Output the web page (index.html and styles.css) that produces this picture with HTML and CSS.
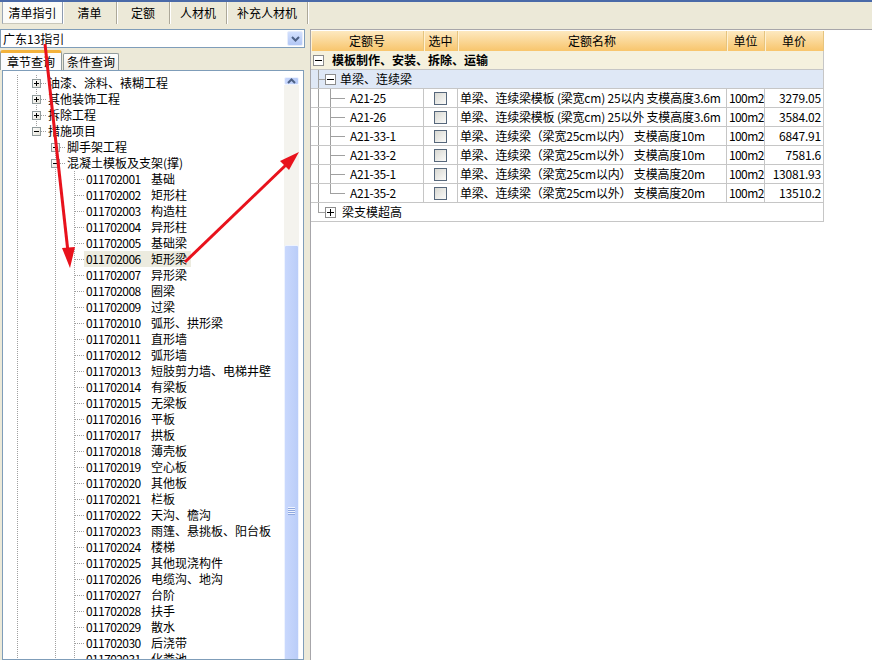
FILE: index.html
```html
<!DOCTYPE html>
<html lang="zh">
<head>
<meta charset="utf-8">
<title>清单指引</title>
<link rel="stylesheet" href="styles.css">
</head>
<body>
<div class="topbar">
  <div class="tab sel w1">清单指引</div>
  <div class="tab w2">清单</div>
  <div class="tab w3">定额</div>
  <div class="tab w4">人材机</div>
  <div class="tab w5">补充人材机</div>
</div>
<div class="main">
  <div class="left">
    <div class="combo">
      <span class="combo-text">广东13指引</span>
      <span class="combo-btn"><svg width="9" height="6" viewBox="0 0 9 6"><path d="M1 1 L4.5 4.5 L8 1" fill="none" stroke="#4d6185" stroke-width="2"/></svg></span>
    </div>
    <div class="subtabs">
      <div class="stab sel">章节查询</div>
      <div class="stab">条件查询</div>
    </div>
    <div class="treebox">
      <div class="tree">
        <div class="row"><span class="g v"></span><span class="g t"><i class="bx plus"></i></span><span class="tx">油漆、涂料、裱糊工程</span></div>
        <div class="row"><span class="g v"></span><span class="g t"><i class="bx plus"></i></span><span class="tx">其他装饰工程</span></div>
        <div class="row"><span class="g v"></span><span class="g t"><i class="bx plus"></i></span><span class="tx">拆除工程</span></div>
        <div class="row"><span class="g v"></span><span class="g l"><i class="bx"></i></span><span class="tx">措施项目</span></div>
        <div class="row"><span class="g v"></span><span class="g"></span><span class="g t"><i class="bx plus"></i></span><span class="tx">脚手架工程</span></div>
        <div class="row"><span class="g v"></span><span class="g"></span><span class="g t"><i class="bx"></i></span><span class="tx">混凝土模板及支架(撑)</span></div>
        <div class="row"><span class="g v"></span><span class="g"></span><span class="g v"></span><span class="g t"></span><span class="tx leaf"><b class="code">011702001</b>基础</span></div>
        <div class="row"><span class="g v"></span><span class="g"></span><span class="g v"></span><span class="g t"></span><span class="tx leaf"><b class="code">011702002</b>矩形柱</span></div>
        <div class="row"><span class="g v"></span><span class="g"></span><span class="g v"></span><span class="g t"></span><span class="tx leaf"><b class="code">011702003</b>构造柱</span></div>
        <div class="row"><span class="g v"></span><span class="g"></span><span class="g v"></span><span class="g t"></span><span class="tx leaf"><b class="code">011702004</b>异形柱</span></div>
        <div class="row"><span class="g v"></span><span class="g"></span><span class="g v"></span><span class="g t"></span><span class="tx leaf"><b class="code">011702005</b>基础梁</span></div>
        <div class="row"><span class="g v"></span><span class="g"></span><span class="g v"></span><span class="g t"></span><span class="tx leaf hl"><b class="code">011702006</b>矩形梁</span></div>
        <div class="row"><span class="g v"></span><span class="g"></span><span class="g v"></span><span class="g t"></span><span class="tx leaf"><b class="code">011702007</b>异形梁</span></div>
        <div class="row"><span class="g v"></span><span class="g"></span><span class="g v"></span><span class="g t"></span><span class="tx leaf"><b class="code">011702008</b>圈梁</span></div>
        <div class="row"><span class="g v"></span><span class="g"></span><span class="g v"></span><span class="g t"></span><span class="tx leaf"><b class="code">011702009</b>过梁</span></div>
        <div class="row"><span class="g v"></span><span class="g"></span><span class="g v"></span><span class="g t"></span><span class="tx leaf"><b class="code">011702010</b>弧形、拱形梁</span></div>
        <div class="row"><span class="g v"></span><span class="g"></span><span class="g v"></span><span class="g t"></span><span class="tx leaf"><b class="code">011702011</b>直形墙</span></div>
        <div class="row"><span class="g v"></span><span class="g"></span><span class="g v"></span><span class="g t"></span><span class="tx leaf"><b class="code">011702012</b>弧形墙</span></div>
        <div class="row"><span class="g v"></span><span class="g"></span><span class="g v"></span><span class="g t"></span><span class="tx leaf"><b class="code">011702013</b>短肢剪力墙、电梯井壁</span></div>
        <div class="row"><span class="g v"></span><span class="g"></span><span class="g v"></span><span class="g t"></span><span class="tx leaf"><b class="code">011702014</b>有梁板</span></div>
        <div class="row"><span class="g v"></span><span class="g"></span><span class="g v"></span><span class="g t"></span><span class="tx leaf"><b class="code">011702015</b>无梁板</span></div>
        <div class="row"><span class="g v"></span><span class="g"></span><span class="g v"></span><span class="g t"></span><span class="tx leaf"><b class="code">011702016</b>平板</span></div>
        <div class="row"><span class="g v"></span><span class="g"></span><span class="g v"></span><span class="g t"></span><span class="tx leaf"><b class="code">011702017</b>拱板</span></div>
        <div class="row"><span class="g v"></span><span class="g"></span><span class="g v"></span><span class="g t"></span><span class="tx leaf"><b class="code">011702018</b>薄壳板</span></div>
        <div class="row"><span class="g v"></span><span class="g"></span><span class="g v"></span><span class="g t"></span><span class="tx leaf"><b class="code">011702019</b>空心板</span></div>
        <div class="row"><span class="g v"></span><span class="g"></span><span class="g v"></span><span class="g t"></span><span class="tx leaf"><b class="code">011702020</b>其他板</span></div>
        <div class="row"><span class="g v"></span><span class="g"></span><span class="g v"></span><span class="g t"></span><span class="tx leaf"><b class="code">011702021</b>栏板</span></div>
        <div class="row"><span class="g v"></span><span class="g"></span><span class="g v"></span><span class="g t"></span><span class="tx leaf"><b class="code">011702022</b>天沟、檐沟</span></div>
        <div class="row"><span class="g v"></span><span class="g"></span><span class="g v"></span><span class="g t"></span><span class="tx leaf"><b class="code">011702023</b>雨篷、悬挑板、阳台板</span></div>
        <div class="row"><span class="g v"></span><span class="g"></span><span class="g v"></span><span class="g t"></span><span class="tx leaf"><b class="code">011702024</b>楼梯</span></div>
        <div class="row"><span class="g v"></span><span class="g"></span><span class="g v"></span><span class="g t"></span><span class="tx leaf"><b class="code">011702025</b>其他现浇构件</span></div>
        <div class="row"><span class="g v"></span><span class="g"></span><span class="g v"></span><span class="g t"></span><span class="tx leaf"><b class="code">011702026</b>电缆沟、地沟</span></div>
        <div class="row"><span class="g v"></span><span class="g"></span><span class="g v"></span><span class="g t"></span><span class="tx leaf"><b class="code">011702027</b>台阶</span></div>
        <div class="row"><span class="g v"></span><span class="g"></span><span class="g v"></span><span class="g t"></span><span class="tx leaf"><b class="code">011702028</b>扶手</span></div>
        <div class="row"><span class="g v"></span><span class="g"></span><span class="g v"></span><span class="g t"></span><span class="tx leaf"><b class="code">011702029</b>散水</span></div>
        <div class="row"><span class="g v"></span><span class="g"></span><span class="g v"></span><span class="g t"></span><span class="tx leaf"><b class="code">011702030</b>后浇带</span></div>
        <div class="row"><span class="g v"></span><span class="g"></span><span class="g v"></span><span class="g t"></span><span class="tx leaf"><b class="code">011702031</b>化粪池</span></div>
      </div>
      <div class="vscroll">
        <div class="sb-up"><svg width="9" height="6" viewBox="0 0 9 6"><path d="M1 5 L4.5 1.5 L8 5" fill="none" stroke="#4d6185" stroke-width="2"/></svg></div>
        <div class="sb-track"><div class="sb-thumb"><span class="grip"></span></div></div>
      </div>
    </div>
  </div>
  <div class="right">
    <div class="grid">
      <div class="hdr">
        <div class="c1">定额号</div>
        <div class="c2">选中</div>
        <div class="c3">定额名称</div>
        <div class="c4">单位</div>
        <div class="c5">单价</div>
      </div>
      <div class="r grp1"><i class="bx box11"></i><span class="gtext b">模板制作、安装、拆除、运输</span></div>
      <div class="r grp2"><span class="lead lead2"><i class="bx box11"></i></span><span class="gtext">单梁、连续梁</span></div>
      <div class="r"><div class="c1 tl"><span>A21-25</span></div><div class="c2"><i class="cb"></i></div><div class="c3">单梁、连续梁模板 (梁宽cm) 25以内 支模高度3.6m</div><div class="c4">100m2</div><div class="c5">3279.05</div></div>
      <div class="r"><div class="c1 tl"><span>A21-26</span></div><div class="c2"><i class="cb"></i></div><div class="c3">单梁、连续梁模板 (梁宽cm) 25以外 支模高度3.6m</div><div class="c4">100m2</div><div class="c5">3584.02</div></div>
      <div class="r"><div class="c1 tl"><span>A21-33-1</span></div><div class="c2"><i class="cb"></i></div><div class="c3">单梁、连续梁（梁宽25cm以内） 支模高度10m</div><div class="c4">100m2</div><div class="c5">6847.91</div></div>
      <div class="r"><div class="c1 tl"><span>A21-33-2</span></div><div class="c2"><i class="cb"></i></div><div class="c3">单梁、连续梁（梁宽25cm以外） 支模高度10m</div><div class="c4">100m2</div><div class="c5">7581.6</div></div>
      <div class="r"><div class="c1 tl"><span>A21-35-1</span></div><div class="c2"><i class="cb"></i></div><div class="c3">单梁、连续梁（梁宽25cm以内） 支模高度20m</div><div class="c4">100m2</div><div class="c5">13081.93</div></div>
      <div class="r"><div class="c1 tl last"><span>A21-35-2</span></div><div class="c2"><i class="cb"></i></div><div class="c3">单梁、连续梁（梁宽25cm以外） 支模高度20m</div><div class="c4">100m2</div><div class="c5">13510.2</div></div>
      <div class="r grp3"><span class="lead lead3"><i class="bx box11 plus"></i></span><span class="gtext">梁支模超高</span></div>
    </div>
  </div>
</div>
<svg class="overlay" width="872" height="660" viewBox="0 0 872 660">
  <line x1="45" y1="44" x2="68" y2="252" stroke="#e8121c" stroke-width="3"/>
  <polygon points="70,268 62,248 75,247" fill="#e8121c"/>
  <line x1="185" y1="262" x2="287" y2="164" stroke="#e8121c" stroke-width="3"/>
  <polygon points="299,152 289,170 280,161" fill="#e8121c"/>
</svg>
</body>
</html>
```
FILE: styles.css
```css
body {
  margin: 0;
  width: 872px;
  height: 660px;
  overflow: hidden;
  position: relative;
  background: #ece9d8;
  font-family: "Noto Sans CJK SC", "Liberation Sans", sans-serif;
  font-size: 12px;
  color: #000;
}

/* top tab bar */
.topbar {
  height: 24px;
  border-top: 2px solid #4a6aa8;
  display: flex;
  align-items: flex-start;
  padding-left: 2px;
}
.tab {
  height: 22px;
  line-height: 22px;
  text-align: center;
  box-sizing: border-box;
  border-right: 1px solid #aca899;
  box-shadow: 1px 0 0 #fff;
  flex: none;
}
.tab.sel {
  background: #fbfbf8;
  border-left: 1px solid #9aa6b6;
  border-right: 1px solid #8d9bb0;
  border-bottom: 1px solid #c9c7ba;
}
.w1 { width: 61px; }
.w2 { width: 54px; }
.w3 { width: 53px; }
.w4 { width: 57px; }
.w5 { width: 81px; }

.main {
  display: flex;
  height: 634px;
}

/* left column */
.left {
  width: 306px;
  flex: none;
  display: flex;
  flex-direction: column;
}
.combo {
  margin-top: 3px;
  width: 305px;
  height: 19px;
  box-sizing: border-box;
  border: 1px solid #7f9db9;
  background: #fff;
  display: flex;
  align-items: center;
  justify-content: space-between;
}
.combo-text {
  padding-left: 2px;
  line-height: 17px;
}
.combo-btn {
  width: 16px;
  height: 15px;
  margin-right: 1px;
  box-sizing: border-box;
  border: 1px solid #e6edfc;
  border-radius: 2px;
  background: linear-gradient(#d3e0fd, #b2c7f5);
  display: flex;
  align-items: center;
  justify-content: center;
}

.subtabs {
  height: 22px;
  display: flex;
  align-items: flex-end;
}
.stab {
  box-sizing: border-box;
  text-align: center;
  flex: none;
}
.stab.sel {
  width: 62px;
  height: 20px;
  line-height: 17px;
  background: #fcfcfe;
  border: 1px solid #919b9c;
  border-bottom: none;
  border-top: 3px solid #f3b23c;
  border-radius: 3px 3px 0 0;
}
.stab:not(.sel) {
  width: 56px;
  height: 17px;
  line-height: 16px;
  margin-left: 1px;
  background: linear-gradient(#ffffff, #ecebe5);
  border: 1px solid #919b9c;
  border-bottom: none;
  border-radius: 2px 2px 0 0;
}

.treebox {
  flex: 1;
  min-height: 0;
  margin-left: 2px;
  width: 302px;
  box-sizing: border-box;
  border: 1px solid #7f9db9;
  background: #fff;
  display: flex;
  overflow: hidden;
}
.tree {
  flex: 1;
  padding: 4px 0 0 5px;
  overflow: hidden;
}
.row {
  display: flex;
  height: 16px;
  line-height: 16px;
  white-space: nowrap;
}
.g {
  width: 19px;
  height: 16px;
  flex: none;
  display: flex;
  align-items: center;
  justify-content: center;
}
.g.v {
  background: repeating-linear-gradient(to bottom, #a0a0a0 0 1px, transparent 1px 2px) 9px 0 / 1px 100% no-repeat;
}
.g.t {
  background:
    repeating-linear-gradient(to right, #a0a0a0 0 1px, transparent 1px 2px) 10px 8px / 9px 1px no-repeat,
    repeating-linear-gradient(to bottom, #a0a0a0 0 1px, transparent 1px 2px) 9px 0 / 1px 100% no-repeat;
}
.g.l {
  background:
    repeating-linear-gradient(to right, #a0a0a0 0 1px, transparent 1px 2px) 10px 8px / 9px 1px no-repeat,
    repeating-linear-gradient(to bottom, #a0a0a0 0 1px, transparent 1px 2px) 9px 0 / 1px 8px no-repeat;
}
.bx {
  display: block;
  width: 9px;
  height: 9px;
  box-sizing: border-box;
  border: 1px solid #919b9c;
  background:
    linear-gradient(#000, #000) center / 5px 1px no-repeat,
    linear-gradient(135deg, #ffffff, #e4e2d8);
}
.bx.plus {
  background:
    linear-gradient(#000, #000) center / 5px 1px no-repeat,
    linear-gradient(#000, #000) center / 1px 5px no-repeat,
    linear-gradient(135deg, #ffffff, #e4e2d8);
}
.tx {
  padding-left: 2px;
}
.tx.leaf {
  padding-right: 4px;
}
.tx.hl {
  background: #ecebdf;
}
.code {
  font-weight: normal;
  display: inline-block;
  width: 65px;
  letter-spacing: -0.6px;
}

/* scrollbar */
.vscroll {
  width: 15px;
  flex: none;
  margin: 6px 4px 0 0;
  display: flex;
  flex-direction: column;
}
.sb-up {
  height: 16px;
  box-sizing: border-box;
  border: 1px solid #eef3fe;
  border-radius: 2px;
  background: linear-gradient(90deg, #c8d7fc, #b7cbf7);
  display: flex;
  align-items: center;
  justify-content: center;
}
.sb-track {
  flex: 1;
  background: #f4f3ee;
}
.sb-thumb {
  margin-top: 160px;
  height: 500px;
  box-sizing: border-box;
  border: 1px solid #eef3fe;
  border-radius: 2px;
  background: linear-gradient(90deg, #c9d8fd, #bacdf8);
  display: flex;
  justify-content: center;
  padding-top: 261px;
}
.grip {
  display: block;
  width: 7px;
  height: 8px;
  background: repeating-linear-gradient(to bottom, #eef3fe 0 1px, #8fa8e0 1px 2px);
}

/* right panel */
.right {
  flex: 1;
  margin: 3px 0 0 4px;
  border-left: 1px solid #a7a6aa;
  border-top: 1px solid #a7a6aa;
  background: #fff;
  padding-top: 1px;
}
.grid {
  width: 513px;
}
.hdr {
  display: flex;
  height: 20px;
  line-height: 20px;
  background: linear-gradient(#fde9c0, #f8c56c);
}
.hdr > div {
  text-align: center;
  box-sizing: border-box;
  border-right: 1px solid #e6c47e;
  box-shadow: inset 1px 0 #fff1d2;
}
.c1 { width: 113px; flex: none; }
.c2 { width: 34px; flex: none; }
.c3 { width: 269px; flex: none; }
.c4 { width: 38px; flex: none; }
.c5 { width: 59px; flex: none; }

.r {
  display: flex;
  height: 19px;
  line-height: 18px;
  box-sizing: border-box;
  border-bottom: 1px solid #c6c6c6;
  border-right: 1px solid #c6c6c6;
  white-space: nowrap;
  align-items: center;
}
.r > div {
  height: 18px;
  box-sizing: border-box;
  border-right: 1px solid #c6c6c6;
  overflow: hidden;
}
.r > div.c5 {
  border-right: none;
}
.grp1 {
  background: #f5f1de;
}
.grp2 {
  background: #dfe8f6;
}
.box11 {
  width: 11px;
  height: 11px;
  border-color: #8c8c8c;
  background:
    linear-gradient(#000, #000) center / 7px 1px no-repeat,
    #fff;
}
.box11.plus {
  background:
    linear-gradient(#000, #000) center / 7px 1px no-repeat,
    linear-gradient(#000, #000) center / 1px 7px no-repeat,
    #fff;
}
.grp1 .box11 {
  margin-left: 2px;
}
.gtext {
  padding-left: 8px;
}
.gtext.b {
  font-weight: bold;
}
.lead {
  display: flex;
  align-items: center;
  height: 18px;
  width: 25px;
  justify-content: flex-end;
  flex: none;
}
.lead2 {
  background:
    linear-gradient(#a0a0a0, #a0a0a0) 7px 0 / 1px 100% no-repeat,
    linear-gradient(#a0a0a0, #a0a0a0) 7px 9px / 7px 1px no-repeat;
}
.lead3 {
  background:
    linear-gradient(#a0a0a0, #a0a0a0) 7px 0 / 1px 9px no-repeat,
    linear-gradient(#a0a0a0, #a0a0a0) 7px 9px / 7px 1px no-repeat;
}
.grp2 .gtext { padding-left: 4px; }
.grp3 .gtext { padding-left: 6px; }

.tl {
  padding-left: 39px;
  background:
    linear-gradient(#a0a0a0, #a0a0a0) 7px 0 / 1px 100% no-repeat,
    linear-gradient(#a0a0a0, #a0a0a0) 19px 0 / 1px 100% no-repeat,
    linear-gradient(#a0a0a0, #a0a0a0) 19px 9px / 15px 1px no-repeat;
}
.tl.last {
  background:
    linear-gradient(#a0a0a0, #a0a0a0) 7px 0 / 1px 100% no-repeat,
    linear-gradient(#a0a0a0, #a0a0a0) 19px 0 / 1px 10px no-repeat,
    linear-gradient(#a0a0a0, #a0a0a0) 19px 9px / 15px 1px no-repeat;
}
.tl span {
  letter-spacing: -0.4px;
}
.c2 {
  display: flex;
  align-items: center;
  justify-content: center;
}
.cb {
  display: block;
  width: 13px;
  height: 13px;
  box-sizing: border-box;
  border: 1px solid #56677b;
  background: linear-gradient(135deg, #d8d8d2, #fbfbf9);
}
.r > .c3 {
  padding-left: 2px;
  letter-spacing: -0.2px;
}
.r > .c4 {
  padding-left: 2px;
  letter-spacing: -0.6px;
}
.r > .c5 {
  text-align: right;
  padding-right: 3px;
  letter-spacing: -0.2px;
}

.overlay {
  position: absolute;
  left: 0;
  top: 0;
  pointer-events: none;
}
```
